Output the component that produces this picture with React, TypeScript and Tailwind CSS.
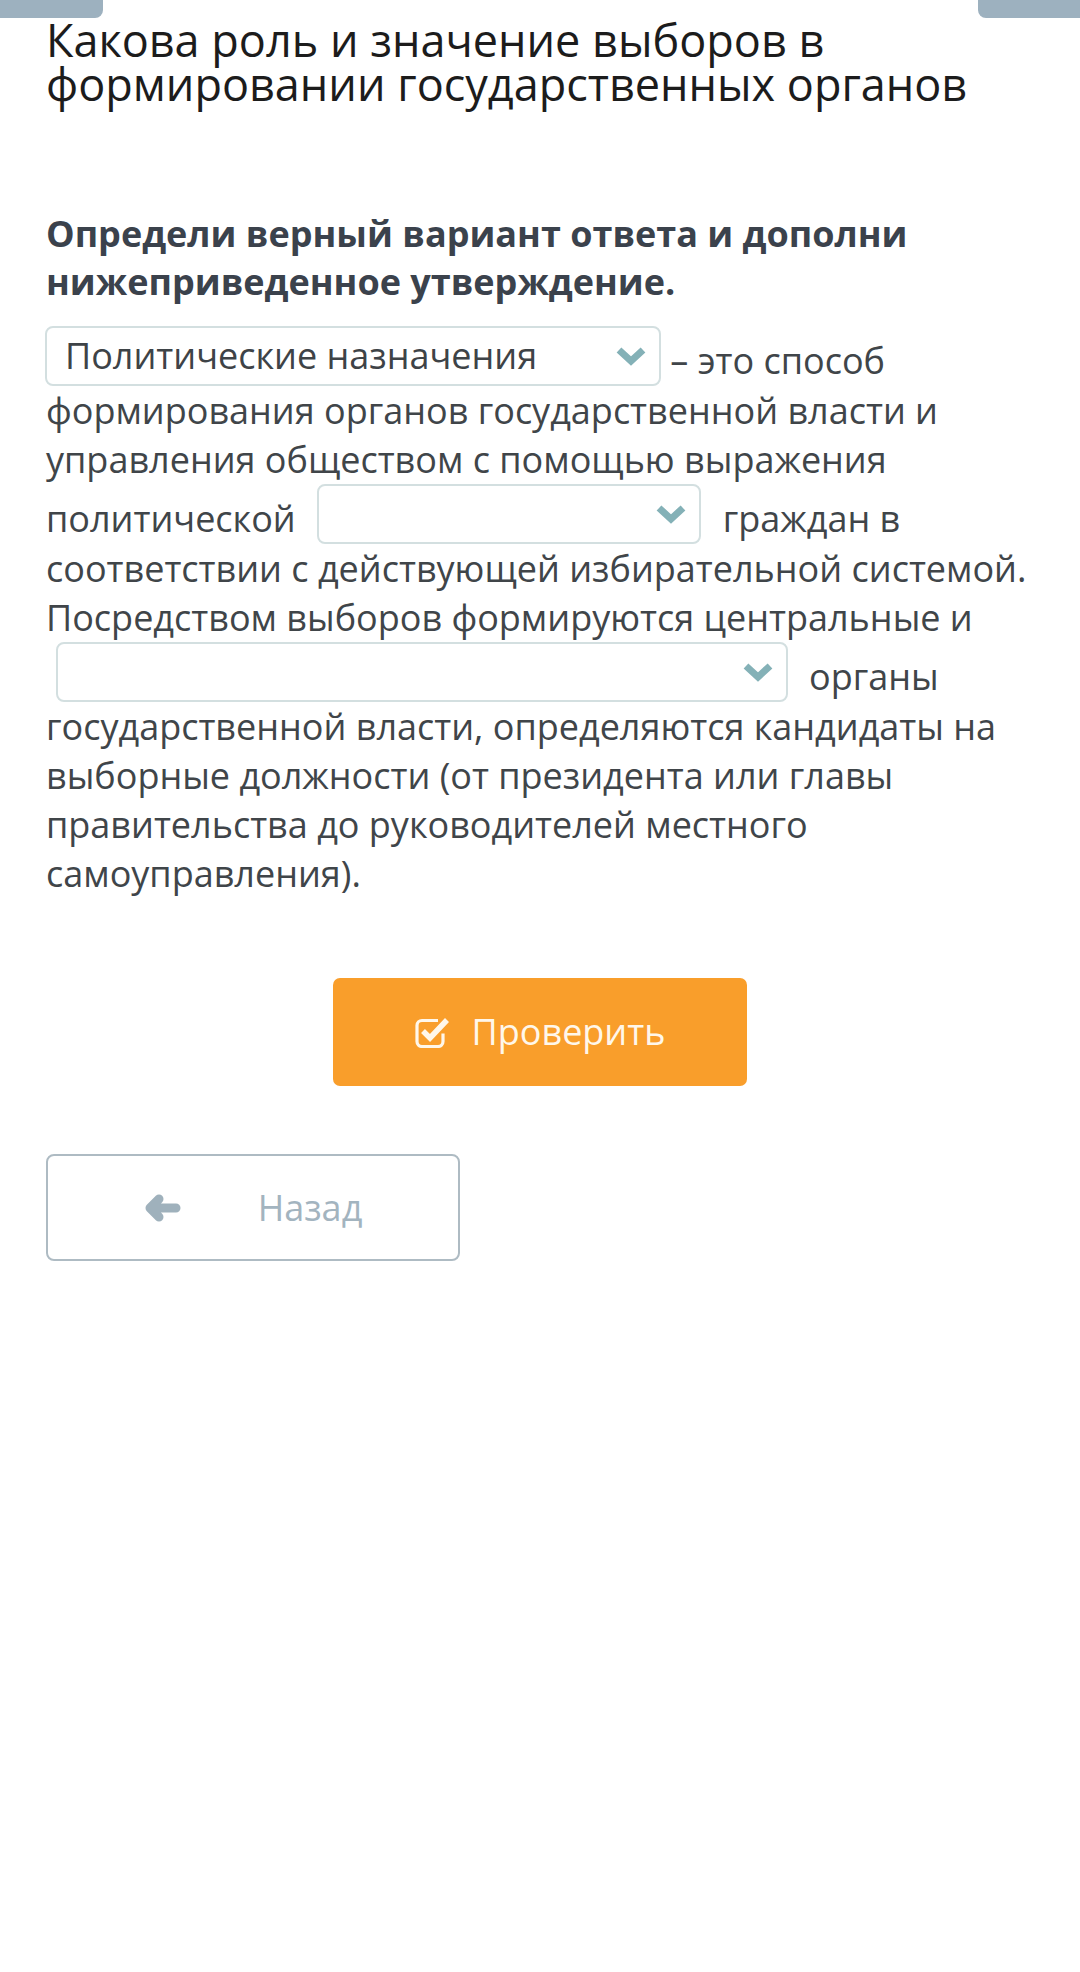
import React from "react";

// Inline dropdown that sits inside the sentence
function Blank({ value, className }: { value?: string; className: string }) {
  return (
    <span
      className={`inline-block h-[60px] overflow-hidden rounded-[8px] border-2 border-[#d3dfe0] bg-white align-[-12px] ${className}`}
    >
      <span className="flex h-full items-center justify-between pl-[18px] pr-[12px]">
        <span className="whitespace-nowrap text-[36px] leading-[44px] text-[#3e4347]">{value}</span>
        <svg width="32" height="20" viewBox="0 0 32 20" className="shrink-0">
          <path d="M4 4 L16 15 L28 4" fill="none" stroke="#84b1b7" strokeWidth="7" strokeLinejoin="miter" />
        </svg>
      </span>
    </span>
  );
}

export default function App() {
  return (
    <div className="min-h-[1972px] bg-white font-['Open_Sans',sans-serif]">
      <div className="flex justify-between">
        <div className="h-[18px] w-[103px] rounded-br-[8px] bg-[#9db1bf]" />
        <div className="h-[18px] w-[102px] rounded-bl-[8px] bg-[#9db1bf]" />
      </div>

      <div className="px-[46px]">
        <h1 className="text-[45px] leading-[44px] text-[#1c1c1c]">
          Какова роль и значение выборов в формировании государственных органов
        </h1>

        <p className="mt-[104px] text-[36px] font-bold leading-[48px] text-[#3b424c]">
          Определи верный вариант ответа и дополни нижеприведенное утверждение.
        </p>

        <p className="mt-[20px] text-[36px] leading-[49px] text-[#404549]">
          <Blank value="Политические назначения" className="-ml-[1px] w-[616px]" /> – это способ
          формирования органов государственной власти и управления обществом с помощью выражения
          политической
          <Blank className="ml-[21px] mr-[22px] w-[384px]" />
          граждан в соответствии с действующей избирательной системой. Посредством выборов
          формируются центральные и
          <Blank className="ml-[10px] mr-[21px] w-[732px]" />
          органы государственной власти, определяются кандидаты на выборные должности (от
          президента или главы правительства до руководителей местного самоуправления).
        </p>

        <div className="mt-[80px] flex justify-center">
          <button className="flex h-[108px] w-[414px] items-center justify-center gap-[22px] rounded-[7px] bg-[#f99e2b] text-[36px] text-[#fff7ea]">
            <svg width="35" height="32" viewBox="0 0 35 32">
              <path
                d="M23 4.5 H7 a5 5 0 0 0 -5 5 v16 a5 5 0 0 0 5 5 h16 a5 5 0 0 0 5 -5 v-8"
                fill="none"
                stroke="#fff7ea"
                strokeWidth="3.2"
              />
              <path d="M8 15 l7 7 L32 4" fill="none" stroke="#fff7ea" strokeWidth="5.5" />
            </svg>
            <span>Проверить</span>
          </button>
        </div>

        <div className="mt-[68px]">
          <button className="flex h-[107px] w-[414px] items-center justify-center gap-[77px] rounded-[8px] border-2 border-[#aebbc3] bg-white text-[36px] text-[#a3b4bf]">
            <svg width="37" height="28" viewBox="0 0 37 28">
              <path
                d="M15 5 L6 14 L15 23 M6 14 H32"
                fill="none"
                stroke="#9fb1bc"
                strokeWidth="9"
                strokeLinecap="round"
                strokeLinejoin="round"
              />
            </svg>
            <span>Назад</span>
          </button>
        </div>
      </div>
    </div>
  );
}
